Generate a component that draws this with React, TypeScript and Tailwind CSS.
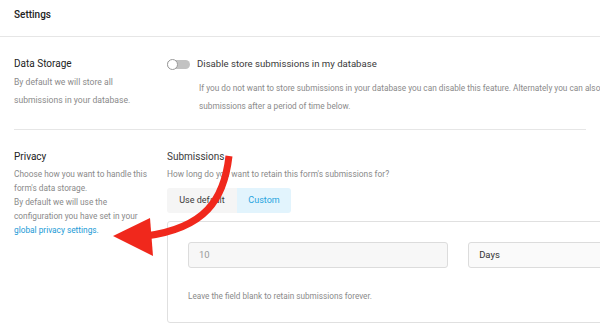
import React from 'react';

const Toggle = () => (
  <div className="relative w-[23px] h-[11px] shrink-0">
    <div className="absolute inset-x-0 top-[1px] h-[9px] rounded-full bg-[#c2c2c2]" />
    <div className="absolute left-0 top-0 w-[11px] h-[11px] rounded-full bg-white border border-[#9a9a9a]" />
  </div>
);

const Arrow = () => (
  <svg className="absolute left-0 top-0 pointer-events-none" width="600" height="328" viewBox="0 0 600 328">
    <path d="M229 156 C 224 200, 205 228, 146 236" fill="none" stroke="#f0281c" strokeWidth="7" />
    <polygon points="113,236 150,218 153,256" fill="#f0281c" />
  </svg>
);

export default function App() {
  return (
    <div className="relative w-[600px] h-[328px] overflow-hidden bg-white font-['Roboto',sans-serif]">
      <div className="h-[37px] border-b border-[#e6e6e6] px-[14px] pt-[8px]">
        <h1 className="text-[10px] leading-[14px] font-medium text-[#222]">Settings</h1>
      </div>

      <div className="mx-[14px] border-b border-[#e6e6e6] grid grid-cols-[153px_1fr] pt-[19px] h-[93px]">
        <div>
          <h2 className="text-[10px] leading-[16px] text-[#222]">Data Storage</h2>
          <p className="mt-[1px] w-[125px] text-[8.6px] leading-[18px] text-[#8a8a8a]">
            By default we will store all submissions in your database.
          </p>
        </div>
        <div>
          <div className="flex items-center gap-[7px] h-[16px]">
            <Toggle />
            <span className="text-[9.6px] text-[#3a3a3a]">Disable store submissions in my database</span>
          </div>
          <p className="mt-[7px] ml-[32px] whitespace-nowrap text-[8.25px] leading-[18px] text-[#8a8a8a]">
            If you do not want to store submissions in your database you can disable this feature. Alternately you can also delete
            <br />
            submissions after a period of time below.
          </p>
        </div>
      </div>

      <div className="mx-[14px] grid grid-cols-[153px_1fr] pt-[19px]">
        <div>
          <h2 className="text-[10px] leading-[16px] text-[#222]">Privacy</h2>
          <div className="mt-[2px] w-[138px] text-[8.3px] leading-[14px] text-[#8a8a8a]">
            <p>Choose how you want to handle this form's data storage.</p>
            <p>
              By default we will use the configuration you have set in your{' '}
              <a className="text-[#1a9ad6]" href="#">global privacy settings.</a>
            </p>
          </div>
        </div>
        <div>
          <h3 className="text-[10px] leading-[16px] text-[#3a3a3a]">Submissions</h3>
          <p className="mt-[2px] text-[8.4px] leading-[14px] text-[#8a8a8a]">
            How long do you want to retain this form's submissions for?
          </p>
          <div className="mt-[7px] flex h-[25px] w-fit">
            <button className="w-[70px] rounded-l-[3px] bg-[#f5f5f5] text-[9px] text-[#3a3a3a]">Use default</button>
            <button className="w-[54px] rounded-r-[3px] bg-[#e2f4fd] text-[9px] text-[#27a4dd]">Custom</button>
          </div>
          <div className="mt-[8px] w-[520px] h-[102px] rounded-[3px] border border-[#e0e0e0] px-[20px] pt-[20px]">
            <div className="flex gap-[20px]">
              <div className="w-[263px] h-[26px] rounded-[3px] border border-[#dcdcdc] bg-[#f7f7f7] flex items-center px-[10px] text-[9.5px] text-[#9a9a9a]">
                10
              </div>
              <div className="w-[200px] h-[26px] rounded-[3px] border border-[#dcdcdc] bg-[#fafafa] flex items-center px-[10px] text-[9.5px] text-[#333]">
                Days
              </div>
            </div>
            <p className="mt-[22px] text-[8.2px] leading-[12px] text-[#8a8a8a]">
              Leave the field blank to retain submissions forever.
            </p>
          </div>
        </div>
      </div>

      <Arrow />
    </div>
  );
}
